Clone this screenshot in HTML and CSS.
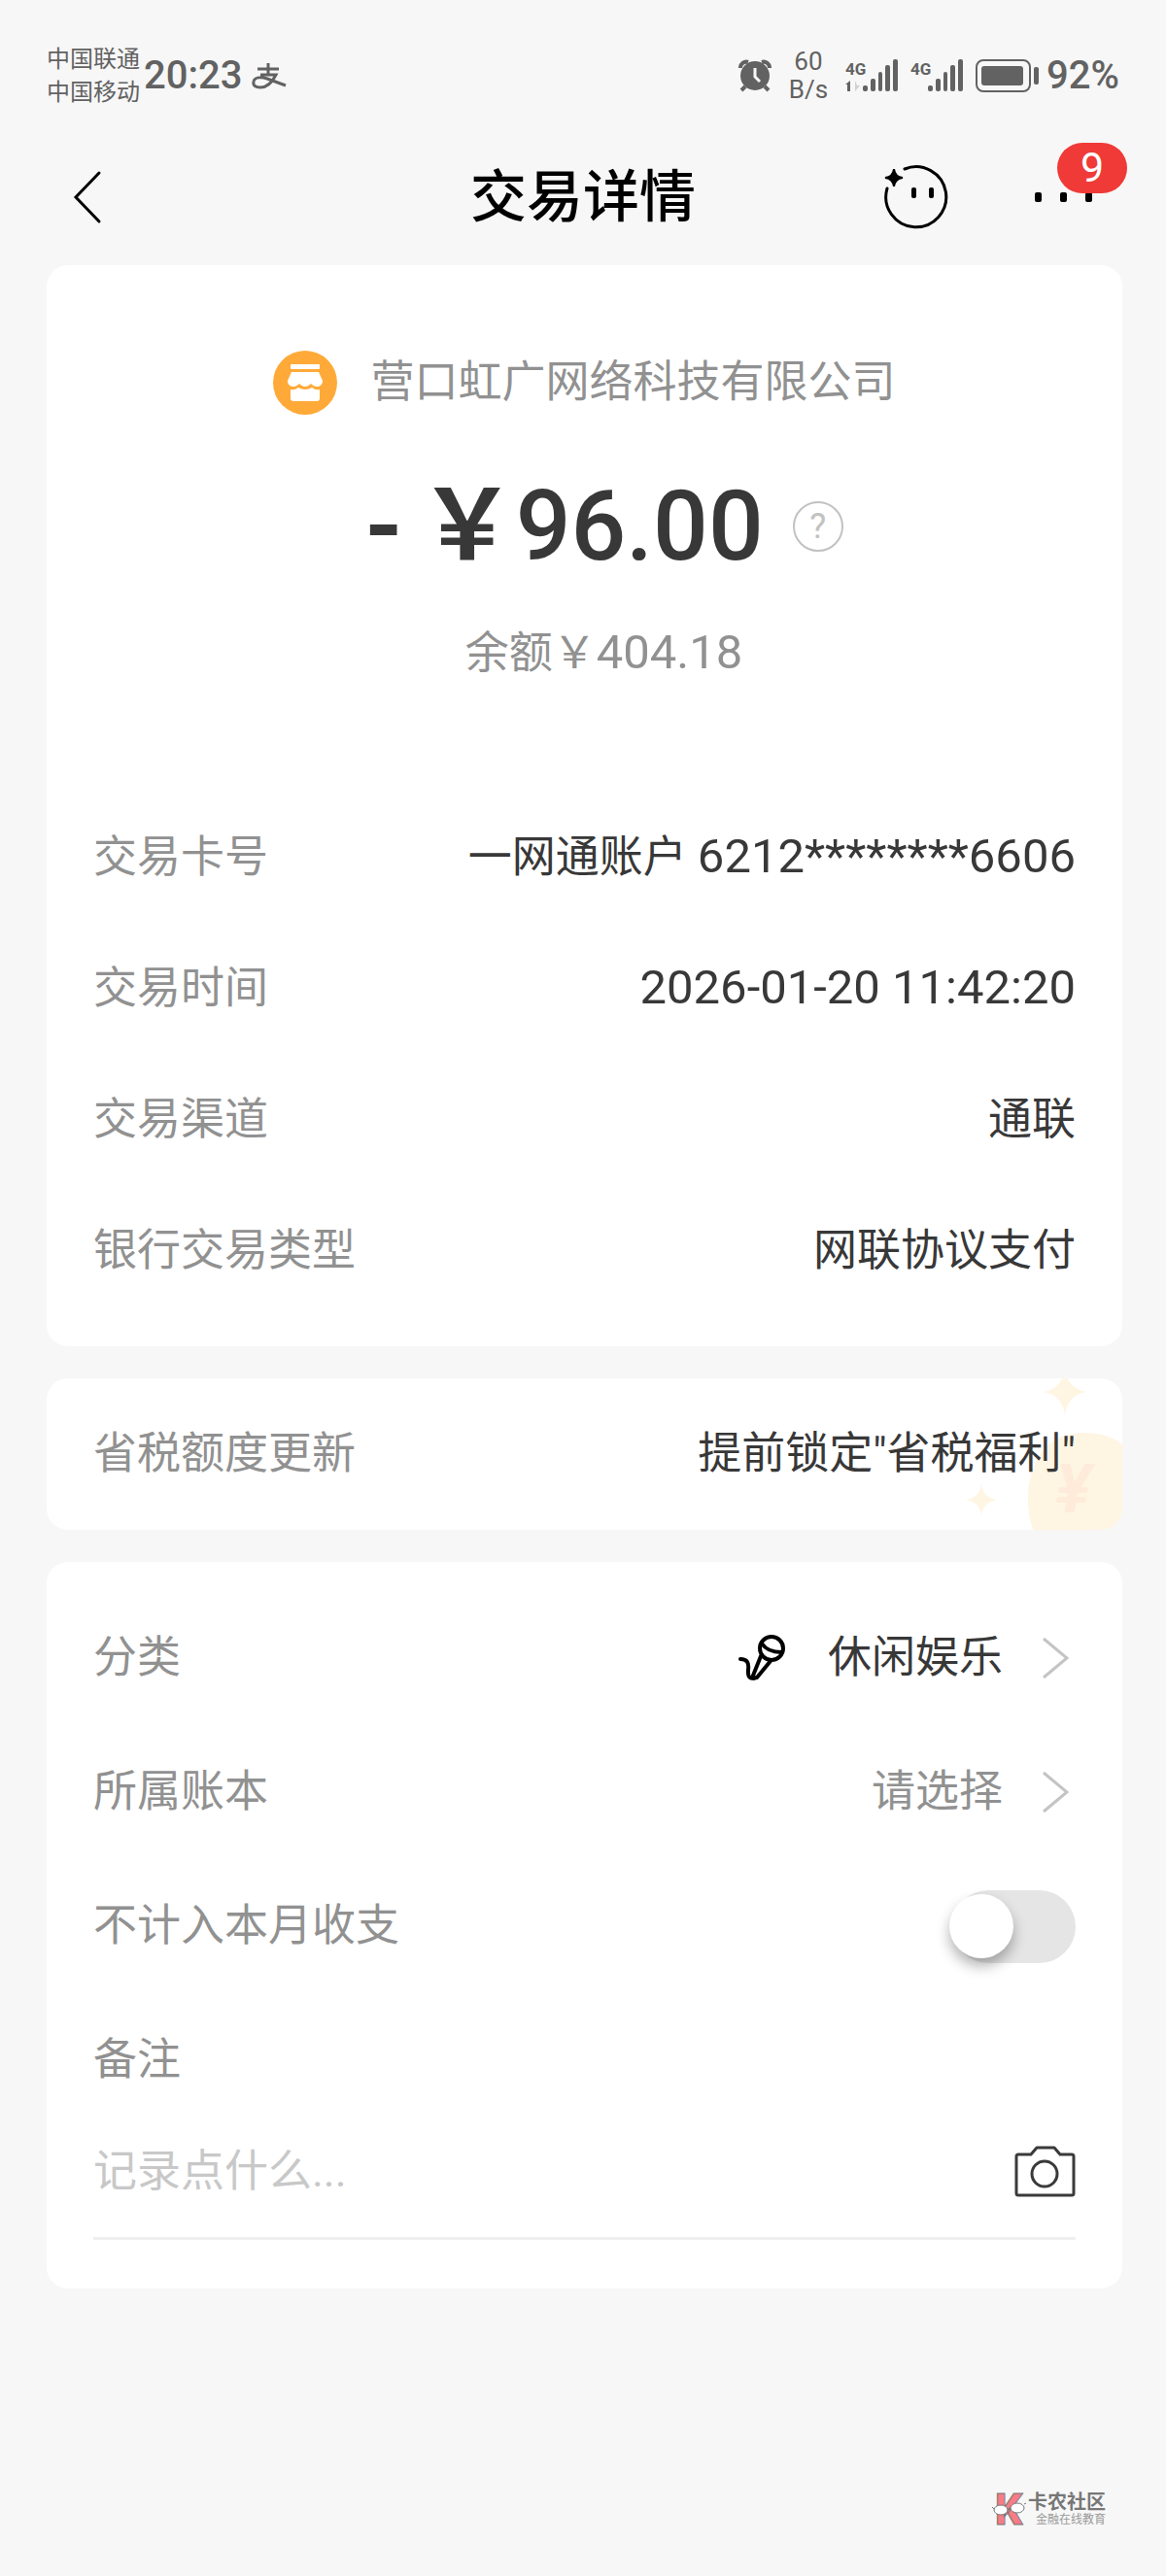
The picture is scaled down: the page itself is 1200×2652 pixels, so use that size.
FILE: index.html
```html
<!doctype html>
<html lang="zh-CN">
<head>
  <meta charset="utf-8">
  <meta name="viewport" content="width=device-width, initial-scale=1">
  <title>交易详情</title>
  <link rel="stylesheet" href="styles.css">
</head>
<body>
  <div class="status-bar">
    <div class="carriers">
      <span>中国联通</span>
      <span>中国移动</span>
    </div>
    <span class="status-text">20:23</span>
    <svg class="pay-icon" width="36" height="28" viewBox="0 0 36 28" fill="none" stroke="#626262" stroke-width="3">
      <path d="M6 7h22M17 1v12M9 13h16c-3 6-8 13-16 13-5 0-8-2-7-6 1-5 8-5 14-3l19 7"/>
    </svg>
    <div class="status-right">
      <svg class="alarm-icon" width="34" height="34" viewBox="0 0 34 34">
        <circle cx="17" cy="17" r="15" fill="#626262"/>
        <path d="M2 9a6 6 0 0 1 8-6M24 3a6 6 0 0 1 8 6M7 28l-4 4M27 28l4 4" fill="none" stroke="#626262" stroke-width="4"/>
        <path d="M17 9v9l5 5" fill="none" stroke="#f7f7f7" stroke-width="3"/>
      </svg>
      <div class="net-speed">
        <span>60</span>
        <span>B/s</span>
      </div>
      <svg class="signal" width="54" height="34" viewBox="0 0 54 34" fill="#626262">
        <text x="0" y="16" class="signal-text">4G</text>
        <path d="M5 22v11h-3v-7h-2z"/>
        <path d="M10 22v11l5-6h-3z" fill="#d0d0d0"/>
        <rect x="18" y="27" width="5" height="6" rx="2"/>
        <rect x="26" y="20" width="5" height="13" rx="2"/>
        <rect x="34" y="13" width="4" height="20" rx="2"/>
        <rect x="41" y="6" width="5" height="27" rx="2"/>
        <rect x="49" y="0" width="5" height="33" rx="2"/>
      </svg>
      <svg class="signal" width="54" height="34" viewBox="0 0 54 34" fill="#626262">
        <text x="0" y="16" class="signal-text">4G</text>
        <rect x="18" y="27" width="5" height="6" rx="2"/>
        <rect x="26" y="20" width="5" height="13" rx="2"/>
        <rect x="34" y="13" width="4" height="20" rx="2"/>
        <rect x="41" y="6" width="5" height="27" rx="2"/>
        <rect x="49" y="0" width="5" height="33" rx="2"/>
      </svg>
      <svg class="battery" width="65" height="34" viewBox="0 0 65 34">
        <rect x="1" y="1" width="55" height="32" rx="7" fill="none" stroke="#626262" stroke-width="2"/>
        <rect x="6" y="7" width="43" height="20" rx="3" fill="#626262"/>
        <rect x="60" y="8" width="5" height="18" rx="2" fill="#626262"/>
      </svg>
      <span class="status-text">92%</span>
    </div>
  </div>

  <header class="nav-bar">
    <button class="nav-button nav-back" aria-label="返回">
      <svg width="30" height="56" viewBox="0 0 30 56"><path d="M27 3L3 28l24 25" fill="none" stroke="#000" stroke-width="3" stroke-linecap="round"/></svg>
    </button>
    <h1>交易详情</h1>
    <div class="nav-actions">
      <button class="nav-button" aria-label="智能助手">
        <svg width="68" height="68" viewBox="0 0 68 68">
          <path d="M22 5A31 31 0 1 1 4 25" fill="none" stroke="#000" stroke-width="3" stroke-linecap="round"/>
          <path d="M11 5q1 8 9 9q-8 1-9 9q-1-8-9-9q8-1 9-9z" stroke="#000" stroke-width="2"/>
          <rect x="29" y="24" width="5" height="11" rx="2"/>
          <rect x="47" y="24" width="5" height="11" rx="2"/>
        </svg>
      </button>
      <button class="nav-button nav-more" aria-label="更多">
        <svg width="60" height="10" viewBox="0 0 60 10">
          <rect x="0" y="0" width="7" height="10" rx="2"/>
          <rect x="26" y="0" width="7" height="10" rx="2"/>
          <rect x="52" y="0" width="7" height="10" rx="2"/>
        </svg>
        <span class="badge">9</span>
      </button>
    </div>
  </header>

  <main>
    <section class="card summary">
      <div class="merchant">
        <svg width="66" height="66" viewBox="0 0 66 66">
          <circle cx="33" cy="33" r="33" fill="#ffaa38"/>
          <rect x="18" y="14" width="30" height="5" rx="1" fill="#fff"/>
          <path d="M19 22h28l4 9c0 4-3 6-6 6-2 0-4-1-6-3-2 2-4 3-6 3s-4-1-6-3c-2 2-4 3-6 3-3 0-6-2-6-6z" fill="#fff"/>
          <path d="M18 40q4 1 8-2q7 4 14 0q4 3 8 2v9q0 3-3 3H21q-3 0-3-3z" fill="#fff"/>
        </svg>
        <span>营口虹广网络科技有限公司</span>
      </div>
      <div class="amount">
        <span class="sign">-</span>
        <span class="currency">￥</span>
        <span>96.00</span>
        <button class="help" aria-label="金额说明">?</button>
      </div>
      <p class="balance">余额￥<span class="num">404.18</span></p>

      <dl class="details">
        <div class="row">
          <dt>交易卡号</dt>
          <dd>一网通账户 <span class="num">6212********6606</span></dd>
        </div>
        <div class="row">
          <dt>交易时间</dt>
          <dd><span class="num">2026-01-20 11:42:20</span></dd>
        </div>
        <div class="row">
          <dt>交易渠道</dt>
          <dd>通联</dd>
        </div>
        <div class="row">
          <dt>银行交易类型</dt>
          <dd>网联协议支付</dd>
        </div>
      </dl>
    </section>

    <a class="card promo" href="#">
      <svg class="promo-art" width="165" height="156" viewBox="0 0 165 156" fill="#fff5e3">
        <path d="M73 156C60 118 70 56 125 56q25 0 40 12v88z"/>
        <path d="M106-10q3 21 22 24q-19 3-22 24q-3-21-22-24q19-3 22-24z"/>
        <path d="M20 109q2 14 16 16q-14 2-16 16q-2-14-16-16q14-2 16-16z"/>
        <text x="96" y="138" class="promo-yen">¥</text>
      </svg>
      <span class="label">省税额度更新</span>
      <span class="promo-text">提前锁定"省税福利"</span>
    </a>

    <section class="card settings">
      <div class="row">
        <span class="label" id="category-label">分类</span>
        <button class="picker" aria-labelledby="category-label category-value">
          <svg class="mic-icon" width="50" height="50" viewBox="0 0 50 50" fill="none" stroke="#000" stroke-width="4" stroke-linecap="round" stroke-linejoin="round">
            <circle cx="34" cy="15" r="12"/>
            <path d="M24 10c4 6 12 9 20 9M23 23L15 43q0 3 4 2L33 28"/>
            <path d="M2 26c7 0 9 4 8 11 0 4-1 9 6 9"/>
          </svg>
          <span id="category-value">休闲娱乐</span>
          <svg class="chevron" width="28" height="44" viewBox="0 0 28 44"><path d="M2 2l24 20L2 42" fill="none" stroke="#c4c4c4" stroke-width="3"/></svg>
        </button>
      </div>
      <div class="row">
        <span class="label" id="book-label">所属账本</span>
        <button class="picker picker-empty" aria-labelledby="book-label book-value">
          <span id="book-value">请选择</span>
          <svg class="chevron" width="28" height="44" viewBox="0 0 28 44"><path d="M2 2l24 20L2 42" fill="none" stroke="#c4c4c4" stroke-width="3"/></svg>
        </button>
      </div>
      <div class="row">
        <label class="label" for="exclude">不计入本月收支</label>
        <input class="switch" type="checkbox" role="switch" id="exclude">
      </div>
      <div class="row">
        <label class="label" for="note">备注</label>
      </div>
      <div class="note">
        <input type="text" id="note" placeholder="记录点什么...">
        <button class="camera" aria-label="添加照片">
          <svg width="64" height="54" viewBox="0 0 64 54" fill="none" stroke="#3a3a3a" stroke-width="3" stroke-linejoin="round">
            <path d="M5 9h13l6-7h18l6 7h12q2 0 2 2v38q0 2-2 2H5q-2 0-2-2V11q0-2 2-2z"/>
            <circle cx="32" cy="29" r="13"/>
          </svg>
        </button>
      </div>
    </section>
  </main>

  <footer class="watermark">
    <svg width="35" height="36" viewBox="0 0 35 36">
      <text x="3" y="34" class="watermark-k">K</text>
      <ellipse cx="9" cy="19" rx="7" ry="5" fill="#fff" stroke="#777"/>
      <ellipse cx="26" cy="17" rx="7" ry="5" fill="#fff" stroke="#777"/>
      <path d="M0 16l2 2M16 19l3-1M33 13l2-1" stroke="#777"/>
    </svg>
    <div class="watermark-text">
      <strong>卡农社区</strong>
      <small>金融在线教育</small>
    </div>
  </footer>
</body>
</html>
```

FILE: styles.css
```css
* {
  box-sizing: border-box;
}
body {
  margin: 0;
  min-height: 100vh;
  display: flex;
  flex-direction: column;
  background: #f7f7f7;
  color: #383838;
  font: 400 45px/60px Roboto, "Noto Sans CJK SC", sans-serif;
}
button, input {
  font: inherit;
  color: inherit;
}
button {
  border: 0;
  padding: 0;
  background: none;
  cursor: pointer;
}
svg {
  display: block;
  flex: none;
}
h1, p, dl, dd {
  margin: 0;
}

/* status bar */
.status-bar {
  display: flex;
  align-items: center;
  padding: 44px 48px 0;
  color: #626262;
}
.carriers {
  display: flex;
  flex-direction: column;
  margin-right: 4px;
  font-size: 24px;
  line-height: 34px;
}
.status-text {
  font-size: 40px;
  font-weight: 500;
  line-height: 48px;
}
.pay-icon {
  margin-left: 10px;
}
.status-right {
  display: flex;
  align-items: center;
  margin-left: auto;
}
.net-speed {
  display: flex;
  flex-direction: column;
  align-items: center;
  margin: 0 18px;
  font-size: 26px;
  line-height: 29px;
}
.signal {
  margin-right: 13px;
  overflow: visible;
}
.signal-text {
  font-size: 17px;
  font-weight: 700;
}
.battery {
  margin-right: 8px;
}

/* title bar */
.nav-bar {
  display: grid;
  grid-template-columns: 1fr auto 1fr;
  align-items: center;
  height: 161px;
  padding: 20px 75px 0;
}
.nav-bar h1 {
  color: #000;
  font-size: 58px;
  font-weight: 500;
  line-height: 80px;
}
.nav-back {
  justify-self: start;
}
.nav-actions {
  display: flex;
  align-items: center;
  justify-content: flex-end;
  gap: 88px;
}
.nav-more {
  position: relative;
}
.badge {
  position: absolute;
  left: 23px;
  bottom: 9px;
  width: 72px;
  height: 52px;
  border-radius: 26px;
  background: #ef3a38;
  color: #fff;
  font-size: 43px;
  line-height: 50px;
  text-align: center;
}

/* cards */
main {
  display: flex;
  flex-direction: column;
  gap: 33px;
  padding: 0 45px 0 48px;
}
.card {
  padding: 0 48px;
  border-radius: 22px;
  background: #fff;
}
.row {
  display: flex;
  align-items: center;
  justify-content: space-between;
}
.label, dt {
  color: #919191;
}
.num {
  font-size: 49px;
}

/* summary */
.summary {
  padding-top: 88px;
  padding-bottom: 31px;
}
.merchant {
  display: flex;
  align-items: center;
  justify-content: center;
  gap: 34px;
  color: #919191;
}
.amount {
  display: flex;
  align-items: center;
  justify-content: center;
  margin-top: 65px;
  padding-left: 40px;
  font-size: 100px;
  font-weight: 500;
  line-height: 100px;
}
.sign {
  margin-right: 16px;
  font-weight: 700;
}
.currency {
  font-weight: 700;
}
.help {
  width: 52px;
  height: 52px;
  margin-left: 30px;
  border: 2px solid #c2c2c2;
  border-radius: 50%;
  color: #c2c2c2;
  font-size: 36px;
  font-weight: 400;
  line-height: 48px;
}
.balance {
  margin-top: 50px;
  padding-left: 40px;
  color: #919191;
  text-align: center;
}
.details {
  margin-top: 112px;
}
.details .row {
  height: 135px;
}

/* promo */
.promo {
  position: relative;
  display: flex;
  align-items: center;
  justify-content: space-between;
  height: 156px;
  overflow: hidden;
  color: inherit;
  text-decoration: none;
}
.promo-art {
  position: absolute;
  top: 0;
  right: 0;
}
.promo-yen {
  fill: #ffebda;
  font-size: 70px;
  font-style: italic;
  font-weight: 700;
}
.promo-text {
  position: relative;
}

/* settings */
.settings {
  padding-top: 30px;
  padding-bottom: 50px;
}
.settings .row {
  height: 138px;
}
.picker {
  display: flex;
  align-items: center;
  padding-right: 7px;
}
.picker-empty {
  color: #919191;
}
.mic-icon {
  margin-right: 42px;
}
.chevron {
  margin-left: 40px;
}
.switch {
  appearance: none;
  position: relative;
  width: 127px;
  height: 75px;
  margin: 0;
  border-radius: 38px;
  background: #e5e5e5;
  cursor: pointer;
}
.switch::before {
  content: "";
  position: absolute;
  top: 4px;
  left: -3px;
  width: 66px;
  height: 66px;
  border-radius: 50%;
  background: #fff;
  box-shadow: 0 8px 14px rgba(0, 0, 0, .3);
}
.switch:checked {
  background: #ef3a38;
}
.switch:checked::before {
  left: 64px;
}
.note {
  display: flex;
  align-items: center;
  height: 116px;
  padding-bottom: 22px;
  border-bottom: 3px solid #efefef;
}
.note input {
  flex: 1;
  min-width: 0;
  padding: 0;
  border: 0;
  outline: 0;
  background: none;
}
.note input::placeholder {
  color: #c8c8c8;
}

/* watermark */
.watermark {
  display: flex;
  align-items: center;
  justify-content: flex-end;
  gap: 2px;
  margin-top: auto;
  padding: 40px 62px 51px;
}
.watermark-k {
  fill: #f77c86;
  stroke: #777;
  font-size: 44px;
  font-weight: 900;
}
.watermark-text {
  display: flex;
  flex-direction: column;
  color: #777;
}
.watermark-text strong {
  font-size: 20px;
  line-height: 22px;
}
.watermark-text small {
  color: #999;
  font-size: 12px;
  line-height: 14px;
  text-align: right;
}
```
